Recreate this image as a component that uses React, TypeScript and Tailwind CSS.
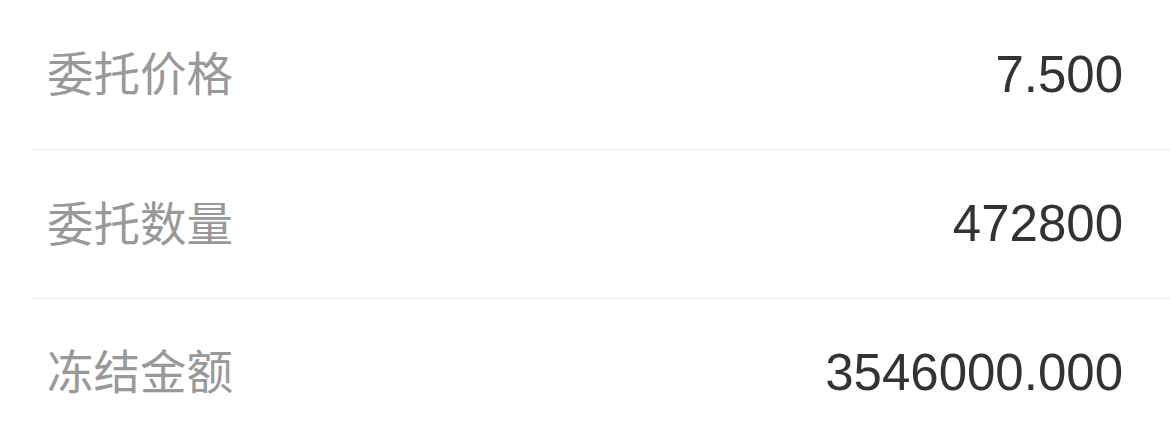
const rows = [
  { label: '委托价格', value: '7.500' },
  { label: '委托数量', value: '472800' },
  { label: '冻结金额', value: '3546000.000' },
];

export default function App() {
  return (
    <div className="w-[1170px] h-[445px] bg-white pl-[30px] overflow-hidden">
      {rows.map((row, i) => (
        <div
          key={row.label}
          className={
            i < rows.length - 1
              ? 'flex items-center justify-between h-[149.5px] pl-[17px] pr-[47px] border-b border-[#ececec]'
              : 'flex items-center justify-between h-[146px] pl-[17px] pr-[47px]'
          }
        >
          <span className="mb-[6px] text-[46.5px] leading-none text-[#999999] font-['Noto_Sans_CJK_SC',sans-serif]">
            {row.label}
          </span>
          <span className="text-[51px] leading-none text-[#333333] font-['Liberation_Sans',Arial,sans-serif]">
            {row.value}
          </span>
        </div>
      ))}
    </div>
  );
}
